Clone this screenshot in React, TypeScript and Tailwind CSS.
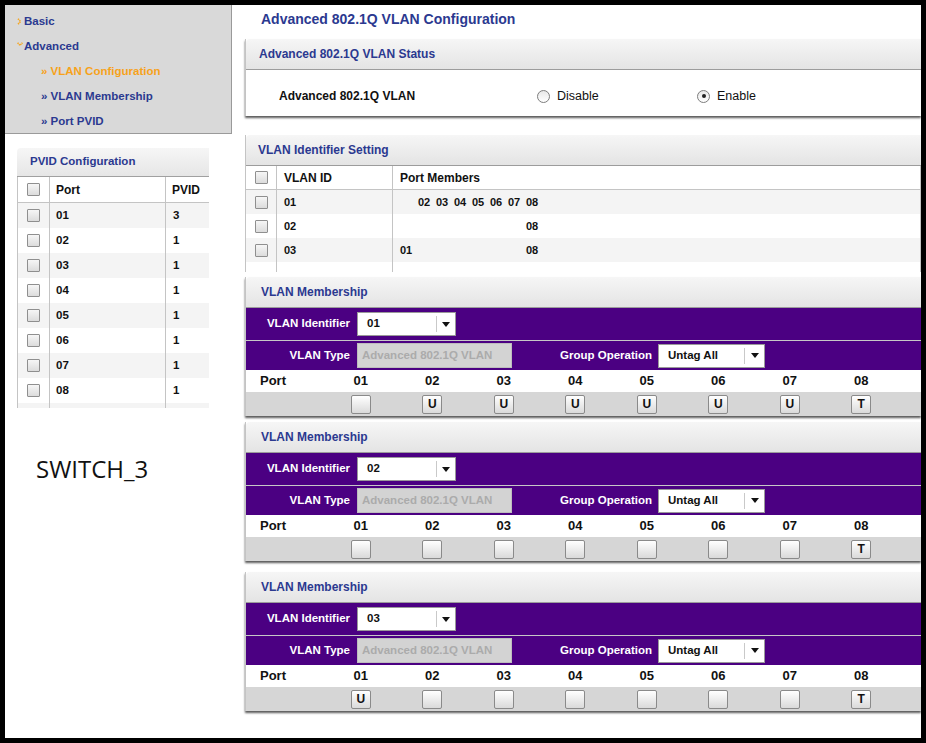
import React from "react"

const ports = ["01", "02", "03", "04", "05", "06", "07", "08"]

const pvidRows = [
  { port: "01", pvid: "3" },
  { port: "02", pvid: "1" },
  { port: "03", pvid: "1" },
  { port: "04", pvid: "1" },
  { port: "05", pvid: "1" },
  { port: "06", pvid: "1" },
  { port: "07", pvid: "1" },
  { port: "08", pvid: "1" },
]

const vlanRows = [
  { id: "01", members: [2, 3, 4, 5, 6, 7, 8] },
  { id: "02", members: [8] },
  { id: "03", members: [1, 8] },
]

const memberships = [
  { id: "01", tags: ["", "U", "U", "U", "U", "U", "U", "T"], gap: "mt-[5px]" },
  { id: "02", tags: ["", "", "", "", "", "", "", "T"], gap: "mt-[6px]" },
  { id: "03", tags: ["U", "", "", "", "", "", "", "T"], gap: "mt-[11px]" },
]

function Checkbox() {
  return (
    <span className="block w-[13px] h-[13px] border border-[#8f8f8f] rounded-[1px] bg-linear-to-b from-[#f6f6f6] to-[#dcdcdc]" />
  )
}

function Radio({ checked }: { checked?: boolean }) {
  return (
    <span className="w-[13px] h-[13px] rounded-full border border-[#7d7d7d] bg-linear-to-b from-[#e8e8e8] to-white flex items-center justify-center">
      {checked && <span className="w-[4px] h-[4px] rounded-full bg-[#222]" />}
    </span>
  )
}

function Arrow() {
  return (
    <svg width="8" height="5" viewBox="0 0 8 5">
      <path d="M0 0h8L4 5z" fill="#111" />
    </svg>
  )
}

function Select({ value, box, text }: { value: string; box: string; text: string }) {
  return (
    <div className={`${box} h-[24px] bg-white border border-[#9a9a9a] flex items-center`}>
      <span className={`${text} pl-[9px] text-[11.5px] font-bold text-[#111]`}>{value}</span>
      <span className="w-px h-[16px] bg-[#c9c9c9]" />
      <span className="flex-1 flex justify-center">
        <Arrow />
      </span>
    </div>
  )
}

function Header({ title, pad }: { title: string; pad: string }) {
  return (
    <div
      className={`h-[31px] flex items-center ${pad} bg-linear-to-b from-[#f6f6f6] to-[#e4e4e4] border-b border-[#9c9c9c] rounded-tl-[4px] text-[12px] font-bold text-[#2b3990]`}
    >
      {title}
    </div>
  )
}

function TagButton({ tag }: { tag: string }) {
  return (
    <span className="w-[20px] h-[19px] border border-[#8a8a8a] rounded-[2px] bg-linear-to-b from-white to-[#dadada] flex items-center justify-center text-[12px] font-bold text-[#111]">
      {tag}
    </span>
  )
}

function Membership({ id, tags, gap }: { id: string; tags: string[]; gap: string }) {
  return (
    <div className={`${gap} bg-white border-l border-[#c4c4c4] shadow-[0_2px_2px_rgba(0,0,0,0.65)]`}>
      <Header title="VLAN Membership" pad="pl-[15px]" />
      <div className="h-[32px] bg-[#4b0082] flex items-center">
        <span className="w-[104px] text-right text-[11.5px] font-bold text-white">VLAN Identifier</span>
        <div className="ml-[7px]">
          <Select value={id} box="w-[99px]" text="w-[78px]" />
        </div>
      </div>
      <div className="h-px bg-[#c7c7c7]" />
      <div className="h-[29px] bg-[#4b0082] flex items-center">
        <span className="w-[104px] text-right text-[11.5px] font-bold text-white">VLAN Type</span>
        <div className="ml-[7px] w-[155px] h-[25px] bg-[#d3d3d3] border border-[#bdbdbd] flex items-center pl-[4px] text-[11.5px] font-bold text-[#ababab]">
          Advanced 802.1Q VLAN
        </div>
        <span className="ml-[48px] text-[11.5px] font-bold text-white">Group Operation</span>
        <div className="ml-[6px]">
          <Select value="Untag All" box="w-[107px]" text="w-[85px]" />
        </div>
      </div>
      <div className="h-[22px] grid grid-cols-[79px_repeat(8,71.5px)] items-center text-[13px] font-bold text-[#111]">
        <span className="pl-[14px]">Port</span>
        {ports.map((p) => (
          <span key={p} className="text-center">
            {p}
          </span>
        ))}
      </div>
      <div className="h-[24px] bg-[#d6d6d6] grid grid-cols-[79px_repeat(8,71.5px)] items-center">
        <span />
        {tags.map((t, i) => (
          <span key={i} className="flex justify-center">
            <TagButton tag={t} />
          </span>
        ))}
      </div>
    </div>
  )
}

function LeftColumn() {
  return (
    <div className="w-[240px] shrink-0">
      <div className="w-[227px] h-[129px] bg-[#d9d9d9] border-r border-b border-[#9a9a9a] pt-[4px] text-[11.5px] font-bold text-[#2b3990]">
        <div className="h-[25px] flex items-center pl-[12px]">
          <svg width="5" height="7" viewBox="0 0 5 7" className="mr-[2px]">
            <path d="M1 0.8L3.6 3.5L1 6.2" fill="none" stroke="#f5a623" strokeWidth="1.6" strokeDasharray="1.4 0.6" />
          </svg>
          Basic
        </div>
        <div className="h-[25px] flex items-center pl-[12px]">
          <svg width="6" height="5" viewBox="0 0 6 5" className="mr-[1px] mb-[4px]">
            <path d="M0.6 0.8L3 3.4L5.4 0.8" fill="none" stroke="#f5a623" strokeWidth="1.6" strokeDasharray="1.4 0.6" />
          </svg>
          Advanced
        </div>
        <div className="h-[25px] flex items-center pl-[36px] text-[#f7a21b]">» VLAN Configuration</div>
        <div className="h-[25px] flex items-center pl-[36px]">» VLAN Membership</div>
        <div className="h-[25px] flex items-center pl-[36px]">» Port PVID</div>
      </div>

      <div className="mt-[14px] ml-[12px] w-[192px]">
        <div className="h-[29px] flex items-center pl-[13px] bg-linear-to-b from-[#f6f6f6] to-[#e6e6e6] border-b border-[#a0a0a0] rounded-tl-[4px] text-[11.5px] font-bold text-[#2b3990]">
          PVID Configuration
        </div>
        <div className="border-l border-[#c4c4c4] text-[#111] font-bold">
          <div className="h-[26px] grid grid-cols-[32px_116px_44px] bg-white border-b border-[#c4c4c4] text-[12px]">
            <div className="flex items-center justify-center border-r border-[#c4c4c4]">
              <Checkbox />
            </div>
            <div className="flex items-center pl-[6px] border-r border-[#c4c4c4]">Port</div>
            <div className="flex items-center pl-[6px]">PVID</div>
          </div>
          {pvidRows.map((r, i) => (
            <div
              key={r.port}
              className={`h-[25px] grid grid-cols-[32px_116px_44px] text-[11.5px] ${i % 2 === 0 ? "bg-[#f4f4f4]" : "bg-white"}`}
            >
              <div className="flex items-center justify-center border-r border-[#c4c4c4]">
                <Checkbox />
              </div>
              <div className="flex items-center pl-[6px] border-r border-[#c4c4c4]">{r.port}</div>
              <div className="flex items-center pl-[7px]">{r.pvid}</div>
            </div>
          ))}
          <div className="h-[5px] grid grid-cols-[32px_116px_44px] bg-[#f4f4f4]">
            <div className="border-r border-[#c4c4c4]" />
            <div className="border-r border-[#c4c4c4]" />
            <div />
          </div>
        </div>
      </div>

      <div className="mt-[45px] pl-[31px] text-[24px] leading-[32px] text-[#111] font-['Open_Sans',sans-serif]">
        SWITCH_3
      </div>
    </div>
  )
}

export default function App() {
  return (
    <div className="w-[926px] h-[743px] bg-black p-[5px] font-['Liberation_Sans',Arial,sans-serif]">
      <div className="h-full bg-white flex overflow-hidden">
        <LeftColumn />

        <div className="flex-1 min-w-0">
          <div className="h-[28px] flex items-center pl-[16px] text-[14px] font-bold text-[#2b3990]">
            Advanced 802.1Q VLAN Configuration
          </div>

          <div className="mt-[6px] bg-white border-l border-[#c4c4c4] shadow-[0_2px_2px_rgba(0,0,0,0.65)]">
            <Header title="Advanced 802.1Q VLAN Status" pad="pl-[13px]" />
            <div className="h-[46px] pt-[6px] flex items-center text-[#111]">
              <span className="w-[291px] shrink-0 pl-[33px] text-[12px] font-bold">Advanced 802.1Q VLAN</span>
              <label className="w-[160px] flex items-center gap-[7px] text-[12.5px]">
                <Radio />
                Disable
              </label>
              <label className="flex items-center gap-[7px] text-[12.5px]">
                <Radio checked />
                Enable
              </label>
            </div>
          </div>

          <div className="mt-[19px] bg-white border-l border-[#c4c4c4]">
            <Header title="VLAN Identifier Setting" pad="pl-[12px]" />
            <div className="w-[675px] border-r border-[#c4c4c4] text-[#111] font-bold">
              <div className="h-[24px] grid grid-cols-[31px_116px_1fr] border-b border-[#c4c4c4] text-[12px]">
                <div className="flex items-center justify-center border-r border-[#c4c4c4]">
                  <Checkbox />
                </div>
                <div className="flex items-center pl-[7px] border-r border-[#c4c4c4]">VLAN ID</div>
                <div className="flex items-center pl-[7px]">Port Members</div>
              </div>
              {vlanRows.map((r, i) => (
                <div
                  key={r.id}
                  className={`h-[24px] grid grid-cols-[31px_116px_1fr] text-[11px] ${i % 2 === 0 ? "bg-[#f4f4f4]" : "bg-white"}`}
                >
                  <div className="flex items-center justify-center border-r border-[#c4c4c4]">
                    <Checkbox />
                  </div>
                  <div className="flex items-center pl-[7px] border-r border-[#c4c4c4]">{r.id}</div>
                  <div className="flex items-center pl-[7px]">
                    {ports.map((p, j) => (
                      <span key={p} className="w-[18px]">
                        {r.members.includes(j + 1) ? p : ""}
                      </span>
                    ))}
                  </div>
                </div>
              ))}
              <div className="h-[10px] grid grid-cols-[31px_116px_1fr]">
                <div className="border-r border-[#c4c4c4]" />
                <div className="border-r border-[#c4c4c4]" />
                <div />
              </div>
            </div>
          </div>

          {memberships.map((m) => (
            <Membership key={m.id} id={m.id} tags={m.tags} gap={m.gap} />
          ))}
        </div>
      </div>
    </div>
  )
}
